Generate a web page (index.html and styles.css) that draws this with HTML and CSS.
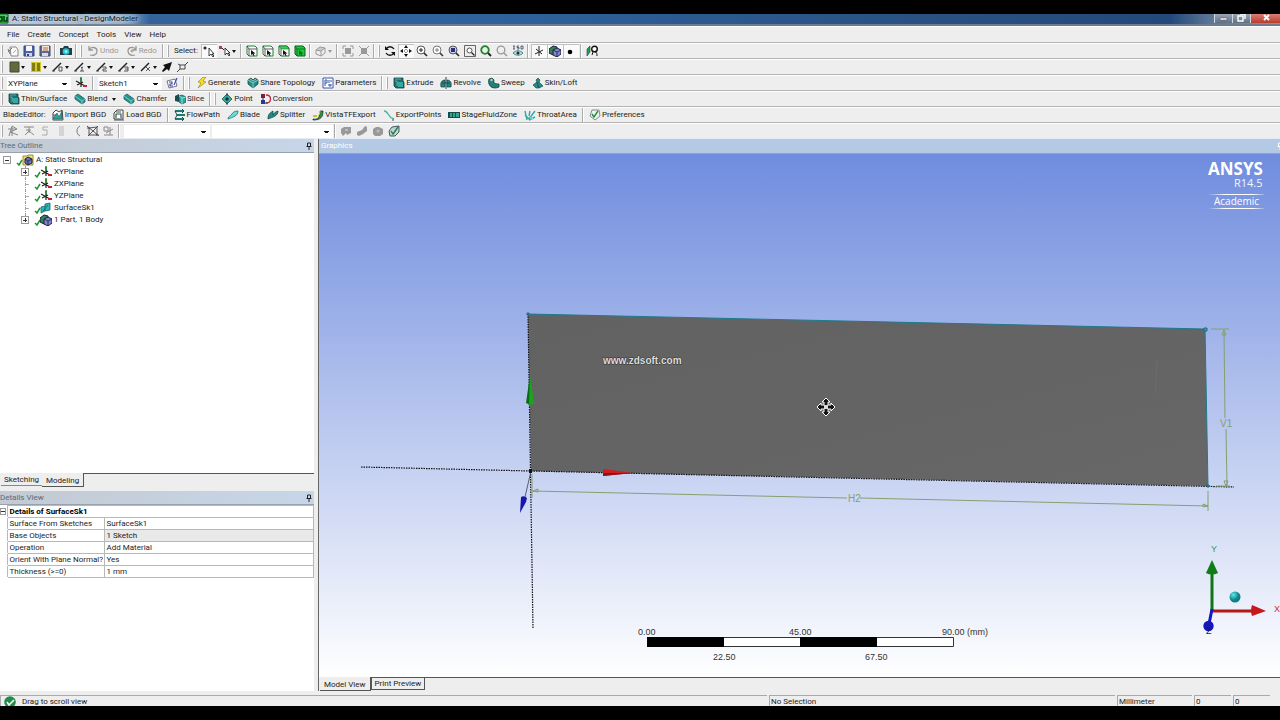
FILE: index.html
```html
<!DOCTYPE html>
<html lang="en">
<head>
<meta charset="utf-8">
<title>A: Static Structural - DesignModeler</title>
<link rel="stylesheet" href="styles.css">
</head>
<body>
<svg class="sprite" aria-hidden="true">
  <defs>
    <symbol id="new" viewBox="0 0 12 12"><path d="M3 2h6l2 3v6H4z" fill="#fafafa" stroke="#888"/><path d="M1 7l4-4M1 4l2 5" stroke="#777" fill="none"/><path d="M6 8l3-3" stroke="#aaa"/></symbol>
    <symbol id="save" viewBox="0 0 12 12"><path d="M1 1h10v10H1z" fill="#4a62a4" stroke="#33457c"/><path d="M3 1h6v5H3z" fill="#f4f6fc"/><path d="M3 8h6v3H3z" fill="#ccd4e8"/><path d="M4 9h2v2H4z" fill="#33457c"/></symbol>
    <symbol id="saveas" viewBox="0 0 12 12"><path d="M1 1h10v10H1z" fill="#5d6b96" stroke="#414b70"/><path d="M3 1h7v5H3z" fill="#f2e3d6"/><path d="M4 3h5M4 5h5" stroke="#b56f4a"/><path d="M3 8h6v3H3z" fill="#ddd"/></symbol>
    <symbol id="camera" viewBox="0 0 12 12"><path d="M0 3h3l1-2h4l1 2h3v7H0z" fill="#243c46"/><circle cx="6" cy="6.5" r="3.3" fill="#27c4cf"/><circle cx="6" cy="6.5" r="1.3" fill="#b9f6f6"/></symbol>
    <symbol id="undo" viewBox="0 0 12 12"><path d="M2 1v4h4M2 5c2-4 8-3 8 1s-4 5-7 4" fill="none" stroke="#999" stroke-width="1.3"/></symbol>
    <symbol id="redo" viewBox="0 0 12 12"><path d="M10 1v4H6M10 5C8 1 2 2 2 6s4 5 7 4" fill="none" stroke="#999" stroke-width="1.3"/><circle cx="6" cy="6" r="1.5" fill="#aaa"/></symbol>
    <symbol id="pick" viewBox="0 0 12 12"><path d="M0 3h4M2 1v4M1 2l2 2M3 2L1 4" stroke="#222" stroke-width=".8"/><path d="M6 3v8l2-2 2 3 1-1-2-2h2z" fill="#fff" stroke="#111" stroke-width=".8"/></symbol>
    <symbol id="pickmode" viewBox="0 0 12 12"><path d="M0 1h3v3H0z" fill="#b33b42"/><path d="M6 3v7l2-2 2 3 1-1-2-2h2z" fill="#fff" stroke="#111" stroke-width=".8"/><path d="M3 3l2 2" stroke="#222"/></symbol>
    <symbol id="cube-v" viewBox="0 0 12 12"><path d="M1 1h8l2 2v8H3L1 9z" fill="#fff" stroke="#23803a"/><path d="M1 1l2 3v7M3 4h8" fill="none" stroke="#333" stroke-width=".8"/><path d="M5 5v5l1.5-1 1 2 1-.5-1-2h2z" fill="#111"/></symbol>
    <symbol id="cube-f" viewBox="0 0 12 12"><path d="M1 1h8l2 2v8H3L1 9z" fill="#fff" stroke="#176b2c"/><path d="M1 1h8l2 3H3z" fill="#36d153" stroke="#176b2c" stroke-width=".6"/><path d="M3 4v7" stroke="#333" stroke-width=".8"/><path d="M5 5v5l1.5-1 1 2 1-.5-1-2h2z" fill="#111"/></symbol>
    <symbol id="cube-b" viewBox="0 0 12 12"><path d="M1 1h8l2 2v8H3L1 9z" fill="#1fc93b" stroke="#08631b"/><path d="M1 1l2 3v7M3 4h8" fill="none" stroke="#08631b" stroke-width=".8"/><path d="M5 5v5l1.5-1 1 2 1-.5-1-2h2z" fill="#062"/></symbol>
    <symbol id="cube-g" viewBox="0 0 12 12"><path d="M1 5l4-3 5 1-4 3z" fill="#ccc" stroke="#999"/><path d="M1 5v4l5 2V6M6 11l4-3V3" fill="none" stroke="#999"/></symbol>
    <symbol id="expand" viewBox="0 0 12 12"><path d="M3 3h6v6H3z" fill="#999"/><path d="M1 4V1h3M8 1h3v3M11 8v3H8M4 11H1V8" fill="none" stroke="#999"/></symbol>
    <symbol id="shrink" viewBox="0 0 12 12"><path d="M3 3h6v6H3z" fill="#999"/><path d="M1 1l3 3M11 1L8 4M11 11L8 8M1 11l3-3" stroke="#999"/></symbol>
    <symbol id="rotate" viewBox="0 0 12 12"><path d="M10 4C8 1 4 1 2 4M2 8c2 3 6 3 8 0" fill="none" stroke="#111" stroke-width="1.3"/><path d="M1 1v4h4zM11 11V7H7z" fill="#111"/></symbol>
    <symbol id="pan" viewBox="0 0 12 12"><path d="M6 0l2 3H4zM6 12l2-3H4zM0 6l3-2v4zM12 6L9 4v4z" fill="#111"/><path d="M6 4v1M6 7v1M4 6h1M7 6h1" stroke="#333"/></symbol>
    <symbol id="zoom-in" viewBox="0 0 12 12"><circle cx="5" cy="5" r="4" fill="#fff" stroke="#555"/><path d="M5 3v4M3 5h4" stroke="#222"/><path d="M8 8l3 3" stroke="#222" stroke-width="1.6"/></symbol>
    <symbol id="zoom-pm" viewBox="0 0 12 12"><circle cx="5" cy="5" r="4" fill="#fff" stroke="#777"/><path d="M5 3v4M3 5h4" stroke="#666" stroke-width=".8"/><path d="M8 8l3 3" stroke="#333" stroke-width="1.5"/></symbol>
    <symbol id="zoom-box" viewBox="0 0 12 12"><circle cx="5" cy="5" r="4" fill="#cdd0f0" stroke="#555"/><path d="M3 3h4v4H3z" fill="#28307f"/><path d="M8 8l3 3" stroke="#222" stroke-width="1.6"/></symbol>
    <symbol id="zoom-win" viewBox="0 0 12 12"><path d="M.5 .5h11v11H.5z" fill="#eee" stroke="#666"/><circle cx="5.5" cy="5.5" r="2.5" fill="#fff" stroke="#555"/><path d="M7.5 7.5l3 3" stroke="#222" stroke-width="1.3"/></symbol>
    <symbol id="zoom-fit" viewBox="0 0 12 12"><circle cx="5" cy="5" r="3.8" fill="#dff6df" stroke="#25812e" stroke-width="1.8"/><path d="M8 8l3 3" stroke="#222" stroke-width="1.8"/></symbol>
    <symbol id="zoom-off" viewBox="0 0 12 12"><circle cx="5" cy="5" r="3.8" fill="#eee" stroke="#999" stroke-width="1.3"/><path d="M8 8l3 3" stroke="#999" stroke-width="1.5"/></symbol>
    <symbol id="iso" viewBox="0 0 12 12"><path d="M1 1h2M2 1v3M1 4h2M7 1H5v1.5h2V4H5M9 1h2v3H9z" stroke="#345" fill="none" stroke-width=".8"/><path d="M1 8c3-3 7-3 10 0-3 3-7 3-10 0z" fill="#b8dede" stroke="#276d72" stroke-width=".8"/><circle cx="6" cy="8" r="1.5" fill="#133"/></symbol>
    <symbol id="tri" viewBox="0 0 12 12"><path d="M6 1v10M2 9l8-4M3 4l6 5" stroke="#222"/></symbol>
    <symbol id="solid" viewBox="0 0 12 12"><path d="M0 4l4-3 4 1v6L4 10 0 8z" fill="#378052" stroke="#124"/><path d="M4 5l4-2 4 2v4l-4 3-4-2z" fill="#7c84d6" stroke="#223"/><path d="M4 5l4 2v5M8 7l4-2" fill="none" stroke="#223" stroke-width=".8"/></symbol>
    <symbol id="dot" viewBox="0 0 12 12"><circle cx="5" cy="7" r="2.3" fill="#000"/></symbol>
    <symbol id="look" viewBox="0 0 12 12"><path d="M1 4l3-3v6l-3 4z" fill="#28a03a" stroke="#145" stroke-width=".6"/><circle cx="8.5" cy="4" r="2.8" fill="#fff" stroke="#111" stroke-width="1.4"/><path d="M7 7l-1 3M9 7c2 0 2 2 2 4" stroke="#111" fill="none"/></symbol>
    <symbol id="swatch" viewBox="0 0 12 12"><path d="M2 1h9v10H2z" fill="#65683e" stroke="#46482c"/></symbol>
    <symbol id="swatch2" viewBox="0 0 12 12"><path d="M1 1h10v10H1z" fill="#d5c928"/><path d="M2 2h3v8H2zM7 2h3v8H7z" fill="#837c14"/></symbol>
    <symbol id="edge0" viewBox="0 0 12 12"><path d="M1 10L9 2" stroke="#222" stroke-width="1.5"/><path d="M0 10h3M7 6h3v4H7z" fill="none" stroke="#444" stroke-width=".9"/></symbol>
    <symbol id="edge1" viewBox="0 0 12 12"><path d="M1 10L9 2" stroke="#222" stroke-width="1.5"/><path d="M0 10h3M8 6v4M7 7l2-1M6 10h4" stroke="#444" stroke-width=".9"/></symbol>
    <symbol id="edge2" viewBox="0 0 12 12"><path d="M1 10L9 2" stroke="#222" stroke-width="1.5"/><path d="M0 10h3M6 6h4v2H7v2h4" fill="none" stroke="#444" stroke-width=".9"/></symbol>
    <symbol id="edge3" viewBox="0 0 12 12"><path d="M1 10L9 2" stroke="#222" stroke-width="1.5"/><path d="M0 10h3M6 6h4v4H6M7 8h3" fill="none" stroke="#444" stroke-width=".9"/></symbol>
    <symbol id="edgex" viewBox="0 0 12 12"><path d="M1 10L9 2" stroke="#222" stroke-width="1.5"/><path d="M6 6l4 4M10 6l-4 4" stroke="#444" stroke-width=".9"/></symbol>
    <symbol id="arrow" viewBox="0 0 12 12"><path d="M11 1L8 10 6 8l-4 3-1-1 3-4-2-2z" fill="#111"/></symbol>
    <symbol id="pts" viewBox="0 0 12 12"><path d="M3 4h5v4H3zM8 4l3-3M3 8l-3 3M1 3l2 1" fill="none" stroke="#444"/></symbol>
    <symbol id="plane" viewBox="0 0 12 12"><path d="M6 1v9M1 4l9 5M2 8l6-3" stroke="#222" stroke-width="1.2"/><path d="M6 0v5" stroke="#278b36" stroke-width="1.5"/><path d="M8 8h4v2H8z" fill="#bd2334"/></symbol>
    <symbol id="sketch" viewBox="0 0 12 12"><path d="M1 4l8-2 2 7-8 2z" fill="#fff" stroke="#556" stroke-width=".8"/><path d="M3 5h3v2H4v2h3M8 8l3-7" fill="none" stroke="#3648a6" stroke-width="1.1"/></symbol>
    <symbol id="bolt" viewBox="0 0 12 12"><path d="M8 0L3 5l3 1-3 5 8-6-3-1 3-4z" fill="#f5dd23" stroke="#8d7d17" stroke-width=".6"/></symbol>
    <symbol id="share" viewBox="0 0 12 12"><path d="M1 3l3-2 2 2 2-2 3 2v4l-5 4-5-4z" fill="#238c88" stroke="#124848" stroke-width=".8"/><path d="M1 3l5 3 5-3M6 6v5M3 2l3 2 3-2" fill="none" stroke="#a5dad6" stroke-width=".8"/></symbol>
    <symbol id="param" viewBox="0 0 12 12"><path d="M1 1h10v10H1z" fill="#fff" stroke="#3659aa"/><path d="M3 9V3h2v3H3M7 3v3M6 8h4M8 7v3M9 3v2" fill="none" stroke="#3659aa"/></symbol>
    <symbol id="extrude" viewBox="0 0 12 12"><path d="M1 1h9v3l1 1v6H3L1 9z" fill="#246b6b" stroke="#123f42" stroke-width=".8"/><path d="M4 5h6v5H5z" fill="#32aaa2"/><path d="M2 2h6M2 4h2v5" fill="none" stroke="#60bfb8" stroke-width=".8"/></symbol>
    <symbol id="revolve" viewBox="0 0 12 12"><path d="M1 10C0 5 2 3 5 3v7zM11 10c1-5-1-7-4-7v7z" fill="#25837c" stroke="#14484a" stroke-width=".7"/><path d="M6 0v12M2 6h8" stroke="#174c4c"/></symbol>
    <symbol id="sweep" viewBox="0 0 12 12"><path d="M1 2l3-1 2 2c-1 3 1 4 5 4v3c-6 3-12-1-10-8z" fill="#258078" stroke="#133f40" stroke-width=".8"/><circle cx="3.5" cy="3" r="1.2" fill="#9bdcd5"/></symbol>
    <symbol id="loft" viewBox="0 0 12 12"><path d="M6 1l2 2-1 2 4 4-4 2H4L1 8l4-3-1-2z" fill="#258b84" stroke="#155052" stroke-width=".7"/><path d="M5 5l2 6" stroke="#135" stroke-width=".7"/></symbol>
    <symbol id="blend" viewBox="0 0 12 12"><path d="M1 3l3-2 7 5v3l-3 2-7-5z" fill="#21958f" stroke="#135356" stroke-width=".7"/><path d="M1 3l7 5 3-2M8 8v3" fill="none" stroke="#a5dedb" stroke-width=".7"/></symbol>
    <symbol id="slice" viewBox="0 0 12 12"><path d="M1 3l4-2v8l-4-1z" fill="#184f54"/><path d="M5 3l3-1 4 2v5l-4 2-3-2z" fill="#2ca79d" stroke="#134a4c" stroke-width=".7"/><path d="M5 3l3 2 4-1M8 5v6" fill="none" stroke="#d0efe9" stroke-width=".7"/></symbol>
    <symbol id="point" viewBox="0 0 12 12"><path d="M6 1l5 5-5 5-5-5z" fill="#3ba69d" stroke="#17585a" stroke-width=".8"/><circle cx="6" cy="6" r="1.7" fill="#0d3437"/><path d="M6 0v3M6 9v3" stroke="#222" stroke-width=".8"/></symbol>
    <symbol id="conv" viewBox="0 0 12 12"><path d="M1 1h4v4H1z" fill="#7d2036"/><path d="M1 7h4v4H1z" fill="#28398f"/><path d="M6 2c6 0 6 8 0 8" fill="none" stroke="#bd2b3f" stroke-width="1.3"/><path d="M3 5v2M5 10h3" stroke="#333"/></symbol>
    <symbol id="import" viewBox="0 0 12 12"><path d="M1 4l3-3 3 2 3-2 1 10H1z" fill="#fff" stroke="#444"/><path d="M1 9l4-5 2 4 3-6v8H2z" fill="#2fa59c" stroke="#174f52" stroke-width=".6"/><path d="M1 6h3" stroke="#a33"/></symbol>
    <symbol id="load" viewBox="0 0 12 12"><path d="M1 4l3-3h6v9H1z" fill="#fff" stroke="#444"/><path d="M3 9V5h5v4M1 11h10M3 3h5" fill="none" stroke="#345a55" stroke-width="1.2"/></symbol>
    <symbol id="flow" viewBox="0 0 12 12"><path d="M1 2h9M3 6h8M1 10h9" stroke="#1c7a76" stroke-width="1.8"/><path d="M1 2l2 4-2 4M8 0l2 2-2 2M8 8l2 2-2 2" fill="none" stroke="#175154"/></symbol>
    <symbol id="blade" viewBox="0 0 12 12"><path d="M1 10c0-3 2-2 4-5 1-2 3-3 6-3 0 5-5 6-10 8z" fill="#6cdcd6" stroke="#1b7478" stroke-width=".8"/></symbol>
    <symbol id="split" viewBox="0 0 12 12"><path d="M1 10c0-5 2-6 5-8v4c1-2 2-3 5-4 0 5-5 6-10 8z" fill="#238a83" stroke="#174d50" stroke-width=".8"/></symbol>
    <symbol id="vista" viewBox="0 0 12 12"><path d="M1 6h4v2H1z" fill="#c9c21b"/><path d="M1 10c5 1 7-2 7-8h3c0 6-2 9-10 9z" fill="#2f9640" stroke="#123" stroke-width=".7"/><path d="M6 7c1-1 2-3 2-5" fill="none" stroke="#e0d936"/></symbol>
    <symbol id="expts" viewBox="0 0 12 12"><path d="M1 2c2 0 3 1 4 3s3 4 6 5" fill="none" stroke="#49b4ad" stroke-width="1.4"/><path d="M9 11h2" stroke="#456"/></symbol>
    <symbol id="stage" viewBox="0 0 12 12"><path d="M0 3h12v6H0z" fill="#174d49"/><path d="M2 4h2v4H2zM5 4h2v4H5zM8 4h3v4H8z" fill="#31a590"/></symbol>
    <symbol id="throat" viewBox="0 0 12 12"><path d="M1 2l2 9M1 6l4 4 6-8M5 11l6-3M6 2L5 7" fill="none" stroke="#33a9a5" stroke-width="1.4"/><path d="M6 8h3v2H6z" fill="#72d5d2"/></symbol>
    <symbol id="pref" viewBox="0 0 12 12"><path d="M3 1h7l1 6-5 4-5-4z" fill="#eaf5ec" stroke="#64756d" stroke-width=".8"/><path d="M3 5l2 3 4-6" fill="none" stroke="#26883f" stroke-width="1.4"/></symbol>
    <symbol id="b1" viewBox="0 0 12 12"><path d="M2 11L5 1l5 3-7 3 8 3M1 4h8M5 2v9" fill="none" stroke="#888"/></symbol>
    <symbol id="b2" viewBox="0 0 12 12"><path d="M1 2h10M6 2v6M2 10l4-4 5 4M3 5h5" fill="none" stroke="#888"/></symbol>
    <symbol id="b3" viewBox="0 0 12 12"><path d="M9 2H4v3h4v5H3" fill="none" stroke="#aaa"/></symbol>
    <symbol id="b4" viewBox="0 0 12 12"><path d="M4 2h5M4 4h5M4 6h5M4 8h5M4 10h5" stroke="#bbb"/></symbol>
    <symbol id="b5" viewBox="0 0 12 12"><path d="M9 1C5 3 5 9 9 11" fill="none" stroke="#777"/></symbol>
    <symbol id="b6" viewBox="0 0 12 12"><path d="M2 3l8-1v8H2zM0 1l12 10M1 11L11 1M0 3h3M9 10h3" fill="none" stroke="#444" stroke-width=".9"/></symbol>
    <symbol id="b7" viewBox="0 0 12 12"><path d="M1 2h4v4H1zM1 10h9M3 8l7-4M7 2v8" fill="none" stroke="#888"/></symbol>
    <symbol id="g1" viewBox="0 0 12 12"><path d="M1 4l3-2h7v6l-4 2-1-2-3 3-2-3z" fill="#999"/><path d="M5 5h3" stroke="#ddd"/></symbol>
    <symbol id="g2" viewBox="0 0 12 12"><path d="M1 7l5-2 3-4 2 1v4L7 9l-4 2-2-1z" fill="#999"/></symbol>
    <symbol id="g3" viewBox="0 0 12 12"><path d="M1 4l3-2h3l4 2v5l-3 2H3L1 9z" fill="#999"/><circle cx="6" cy="6" r="1.5" fill="#bbb"/></symbol>
    <symbol id="g4" viewBox="0 0 12 12"><path d="M1 6l3-4 7-1v6l-4 4H2z" fill="#b9d9cc" stroke="#234" stroke-width=".8"/><path d="M3 6l2 3 5-7" fill="none" stroke="#28764a" stroke-width="1.3"/></symbol>
    <symbol id="tick" viewBox="0 0 7 7"><path d="M1 4l2 2 3-5" fill="none" stroke="#1a9a28" stroke-width="1.5"/></symbol>
    <symbol id="model" viewBox="0 0 12 12"><path d="M1 2h4l1-1h5v10H1z" fill="#eadf7c" stroke="#9b9136"/><path d="M3 5l3-2 4 2v4l-4 2-3-2z" fill="#6870c5" stroke="#223"/><path d="M3 5l3 2 4-2M6 7v4" fill="none" stroke="#223" stroke-width=".8"/></symbol>
    <symbol id="surf" viewBox="0 0 12 12"><path d="M1 5l4-1V2l5-1v7l-5 1-4 2z" fill="#28b8bd" stroke="#176065" stroke-width=".8"/><path d="M5 4v5M8 3l-5 6" stroke="#176065" stroke-width=".8"/></symbol>
    <symbol id="pin" viewBox="0 0 8 8"><path d="M2.5 1h3v3.5h-3zM1.5 4.5h5M4 5v3" fill="none" stroke="currentColor"/></symbol>
  </defs>
</svg>

<div class="app">
  <header class="titlebar">
    <svg class="icon" viewBox="0 0 12 12"><path d="M0 1h10v9H0z" fill="#41d854" stroke="#11551d"/><path d="M1 4h3v4H1M6 3v5h3V4" fill="none" stroke="#073311" stroke-width="1.5"/></svg>
    <h1 class="title">A: Static Structural - DesignModeler</h1>
    <div class="winbtns">
      <button class="winbtn" aria-label="Minimize"><svg viewBox="0 0 12 10"><path d="M2 4h7v2H2z" fill="#fff" stroke="#445" stroke-width=".5"/></svg></button>
      <button class="winbtn" aria-label="Restore"><svg viewBox="0 0 12 10"><path d="M4 0h5v5M2 2h5v5H2z" fill="none" stroke="#fff" stroke-width="1.4"/></svg></button>
      <button class="winbtn close" aria-label="Close"><svg viewBox="0 0 12 10"><path d="M4 1l5 5M9 1L4 6" stroke="#fff" stroke-width="1.8"/></svg></button>
    </div>
  </header>

  <nav class="menu bar">
    <button>File</button><button>Create</button><button>Concept</button><button>Tools</button><button>View</button><button>Help</button>
  </nav>

  <div class="bar">
    <i class="grip"></i>
    <button class="tb" aria-label="New"><svg class="icon"><use href="#new"/></svg></button>
    <button class="tb" aria-label="Save"><svg class="icon"><use href="#save"/></svg></button>
    <button class="tb" aria-label="Save as"><svg class="icon"><use href="#saveas"/></svg></button>
    <i class="sep"></i>
    <button class="tb" aria-label="Snapshot"><svg class="icon"><use href="#camera"/></svg></button>
    <i class="sep"></i><i class="grip"></i>
    <button class="tool off" disabled><svg class="icon"><use href="#undo"/></svg>Undo</button>
    <button class="tool off" disabled><svg class="icon"><use href="#redo"/></svg>Redo</button>
    <i class="sep"></i><i class="grip"></i>
    <span class="label">Select:</span>
    <button class="tb on" aria-label="New selection"><svg class="icon"><use href="#pick"/></svg></button>
    <button class="tb drop" aria-label="Select mode"><svg class="icon"><use href="#pickmode"/></svg></button>
    <i class="sep"></i>
    <button class="tb" aria-label="Points"><svg class="icon"><use href="#cube-v"/></svg></button>
    <button class="tb" aria-label="Edges"><svg class="icon"><use href="#cube-v"/></svg></button>
    <button class="tb" aria-label="Faces"><svg class="icon"><use href="#cube-f"/></svg></button>
    <button class="tb" aria-label="Bodies"><svg class="icon"><use href="#cube-b"/></svg></button>
    <i class="sep"></i>
    <button class="tb drop off" aria-label="Extend"><svg class="icon"><use href="#cube-g"/></svg></button>
    <i class="sep"></i>
    <button class="tb" aria-label="Expand"><svg class="icon"><use href="#expand"/></svg></button>
    <button class="tb" aria-label="Shrink"><svg class="icon"><use href="#shrink"/></svg></button>
    <i class="sep"></i><i class="grip"></i>
    <button class="tb" aria-label="Rotate"><svg class="icon"><use href="#rotate"/></svg></button>
    <button class="tb on" aria-label="Pan"><svg class="icon"><use href="#pan"/></svg></button>
    <button class="tb" aria-label="Zoom"><svg class="icon"><use href="#zoom-in"/></svg></button>
    <button class="tb" aria-label="Zoom in or out"><svg class="icon"><use href="#zoom-pm"/></svg></button>
    <button class="tb" aria-label="Box zoom"><svg class="icon"><use href="#zoom-box"/></svg></button>
    <button class="tb" aria-label="Window zoom"><svg class="icon"><use href="#zoom-win"/></svg></button>
    <button class="tb" aria-label="Zoom to fit"><svg class="icon"><use href="#zoom-fit"/></svg></button>
    <button class="tb" aria-label="Magnifier"><svg class="icon"><use href="#zoom-off"/></svg></button>
    <button class="tb" aria-label="Isometric"><svg class="icon"><use href="#iso"/></svg></button>
    <i class="sep"></i>
    <button class="tb on" aria-label="Display plane"><svg class="icon"><use href="#tri"/></svg></button>
    <button class="tb on" aria-label="Display model"><svg class="icon"><use href="#solid"/></svg></button>
    <button class="tb on" aria-label="Display points"><svg class="icon"><use href="#dot"/></svg></button>
    <i class="sep"></i>
    <button class="tb" aria-label="Look at"><svg class="icon"><use href="#look"/></svg></button>
  </div>

  <div class="bar">
    <i class="grip"></i>
    <button class="tb drop" aria-label="Face color"><svg class="icon"><use href="#swatch"/></svg></button>
    <button class="tb drop" aria-label="Edge color"><svg class="icon"><use href="#swatch2"/></svg></button>
    <button class="tb drop" aria-label="Edge 0"><svg class="icon"><use href="#edge0"/></svg></button>
    <button class="tb drop" aria-label="Edge 1"><svg class="icon"><use href="#edge1"/></svg></button>
    <button class="tb drop" aria-label="Edge 2"><svg class="icon"><use href="#edge2"/></svg></button>
    <button class="tb drop" aria-label="Edge 3"><svg class="icon"><use href="#edge3"/></svg></button>
    <button class="tb drop" aria-label="Edge x"><svg class="icon"><use href="#edgex"/></svg></button>
    <button class="tb" aria-label="Direction"><svg class="icon"><use href="#arrow"/></svg></button>
    <button class="tb" aria-label="Vertices"><svg class="icon"><use href="#pts"/></svg></button>
  </div>

  <div class="bar">
    <i class="grip"></i>
    <select class="combo" aria-label="Active plane"><option>XYPlane</option></select>
    <button class="tb wide" aria-label="New plane"><svg class="icon"><use href="#plane"/></svg></button>
    <i class="sep"></i>
    <select class="combo" aria-label="Active sketch"><option>Sketch1</option></select>
    <button class="tb wide" aria-label="New sketch"><svg class="icon"><use href="#sketch"/></svg></button>
    <i class="sep"></i><i class="grip"></i>
    <button class="tool"><svg class="icon"><use href="#bolt"/></svg>Generate</button>
    <button class="tool"><svg class="icon"><use href="#share"/></svg>Share Topology</button>
    <button class="tool"><svg class="icon"><use href="#param"/></svg>Parameters</button>
    <i class="sep"></i><i class="grip"></i>
    <button class="tool"><svg class="icon"><use href="#extrude"/></svg>Extrude</button>
    <button class="tool"><svg class="icon"><use href="#revolve"/></svg>Revolve</button>
    <button class="tool"><svg class="icon"><use href="#sweep"/></svg>Sweep</button>
    <button class="tool"><svg class="icon"><use href="#loft"/></svg>Skin/Loft</button>
  </div>

  <div class="bar">
    <i class="grip"></i>
    <button class="tool"><svg class="icon"><use href="#extrude"/></svg>Thin/Surface</button>
    <button class="tool drop"><svg class="icon"><use href="#blend"/></svg>Blend</button>
    <button class="tool"><svg class="icon"><use href="#blend"/></svg>Chamfer</button>
    <button class="tool"><svg class="icon"><use href="#slice"/></svg>Slice</button>
    <i class="sep"></i><i class="grip"></i>
    <button class="tool"><svg class="icon"><use href="#point"/></svg>Point</button>
    <button class="tool"><svg class="icon"><use href="#conv"/></svg>Conversion</button>
  </div>

  <div class="bar">
    <span class="label">BladeEditor:</span>
    <button class="tool"><svg class="icon"><use href="#import"/></svg>Import BGD</button>
    <button class="tool"><svg class="icon"><use href="#load"/></svg>Load BGD</button>
    <i class="sep"></i>
    <button class="tool"><svg class="icon"><use href="#flow"/></svg>FlowPath</button>
    <button class="tool"><svg class="icon"><use href="#blade"/></svg>Blade</button>
    <button class="tool"><svg class="icon"><use href="#split"/></svg>Splitter</button>
    <button class="tool"><svg class="icon"><use href="#vista"/></svg>VistaTFExport</button>
    <button class="tool"><svg class="icon"><use href="#expts"/></svg>ExportPoints</button>
    <button class="tool"><svg class="icon"><use href="#stage"/></svg>StageFluidZone</button>
    <button class="tool"><svg class="icon"><use href="#throat"/></svg>ThroatArea</button>
    <i class="sep"></i>
    <button class="tool"><svg class="icon"><use href="#pref"/></svg>Preferences</button>
  </div>

  <div class="bar last">
    <i class="grip"></i>
    <button class="tb" aria-label="Blade tool 1"><svg class="icon"><use href="#b1"/></svg></button>
    <button class="tb" aria-label="Blade tool 2"><svg class="icon"><use href="#b2"/></svg></button>
    <button class="tb" aria-label="Blade tool 3"><svg class="icon"><use href="#b3"/></svg></button>
    <button class="tb" aria-label="Blade tool 4"><svg class="icon"><use href="#b4"/></svg></button>
    <button class="tb" aria-label="Blade tool 5"><svg class="icon"><use href="#b5"/></svg></button>
    <button class="tb" aria-label="Blade tool 6"><svg class="icon"><use href="#b6"/></svg></button>
    <button class="tb" aria-label="Blade tool 7"><svg class="icon"><use href="#b7"/></svg></button>
    <i class="sep"></i>
    <select class="combo medium" aria-label="Blade"><option></option></select>
    <select class="combo long" aria-label="Layer"><option></option></select>
    <i class="sep"></i>
    <button class="tb" aria-label="Section 1"><svg class="icon"><use href="#g1"/></svg></button>
    <button class="tb" aria-label="Section 2"><svg class="icon"><use href="#g2"/></svg></button>
    <button class="tb" aria-label="Section 3"><svg class="icon"><use href="#g3"/></svg></button>
    <button class="tb" aria-label="Section 4"><svg class="icon"><use href="#g4"/></svg></button>
  </div>

  <main class="work">
    <aside class="side">
      <h2 class="head">Tree Outline<svg class="pin"><use href="#pin"/></svg></h2>
      <ul class="tree">
        <li class="node"><span class="box minus"></span><svg class="tick"><use href="#tick"/></svg><svg class="icon"><use href="#model"/></svg>A: Static Structural</li>
        <li class="node sub"><span class="box plus"></span><svg class="tick"><use href="#tick"/></svg><svg class="icon"><use href="#plane"/></svg>XYPlane</li>
        <li class="node sub"><span class="twig"></span><svg class="tick"><use href="#tick"/></svg><svg class="icon"><use href="#plane"/></svg>ZXPlane</li>
        <li class="node sub"><span class="twig"></span><svg class="tick"><use href="#tick"/></svg><svg class="icon"><use href="#plane"/></svg>YZPlane</li>
        <li class="node sub"><span class="twig"></span><svg class="tick"><use href="#tick"/></svg><svg class="icon"><use href="#surf"/></svg>SurfaceSk1</li>
        <li class="node sub"><span class="box plus"></span><svg class="tick"><use href="#tick"/></svg><svg class="icon"><use href="#solid"/></svg>1 Part, 1 Body</li>
      </ul>
      <div class="tabs"><button class="tab">Sketching</button><button class="tab current">Modeling</button><span class="rest"></span></div>
      <h2 class="head">Details View<svg class="pin"><use href="#pin"/></svg></h2>
      <div class="details">
        <table class="grid">
          <colgroup><col class="fold-col"><col class="key-col"><col></colgroup>
          <tr><td class="fold"><span class="box minus"></span></td><th colspan="2">Details of SurfaceSk1</th></tr>
          <tr><td class="fold"></td><td>Surface From Sketches</td><td>SurfaceSk1</td></tr>
          <tr><td class="fold"></td><td>Base Objects</td><td class="ro">1 Sketch</td></tr>
          <tr><td class="fold"></td><td>Operation</td><td>Add Material</td></tr>
          <tr><td class="fold"></td><td>Orient With Plane Normal?</td><td>Yes</td></tr>
          <tr><td class="fold"></td><td>Thickness (&gt;=0)</td><td>1 mm</td></tr>
        </table>
      </div>
    </aside>

    <section class="view">
      <h2 class="head light">Graphics<svg class="pin"><use href="#pin"/></svg></h2>
      <div class="canvas">
        <svg class="scene" viewBox="319 154 961 523" preserveAspectRatio="xMidYMid meet">
          <defs>
            <linearGradient id="rule"><stop offset="0" stop-color="#fff" stop-opacity="0"/><stop offset=".3" stop-color="#fff"/><stop offset=".8" stop-color="#fff"/><stop offset="1" stop-color="#fff" stop-opacity=".2"/></linearGradient>
            <linearGradient id="face" x2="1" y2="1"><stop offset="0" stop-color="#626262"/><stop offset=".5" stop-color="#646464"/><stop offset="1" stop-color="#676767"/></linearGradient>
            <radialGradient id="ball" cx=".35" cy=".3"><stop offset="0" stop-color="#5fe9ea"/><stop offset="1" stop-color="#0d7f85"/></radialGradient>
          </defs>
          <text class="logo" x="1208" y="175">ANSYS</text>
          <text class="release" x="1234" y="187">R14.5</text>
          <text class="edition" x="1214" y="205">Academic</text>
          <path d="M1208 194h56v1h-56zM1208 208h56v1h-56z" fill="url(#rule)"/>

          <path d="M528 314L1205 329 1208 486 531 471z" fill="url(#face)"/>
          <path d="M528 314L1205 329 1208 486" fill="none" stroke="#20798c"/>
          <path d="M361 467L531 471 1234 487M528 314L533 628" fill="none" stroke="#111" stroke-width="1.2" stroke-dasharray="1.5 1"/>
          <path d="M527 313h2v2h-2zM1204 328h3v3h-3zM1207 485h2v2h-2z" fill="#30a6c0" stroke="#176d82"/>
          <path d="M1157 360l-2 34" stroke="#6c6c6c"/>
          <path d="M530 375l4 28q-4 4-7 0z" fill="#18a51e"/><path d="M530 375l-1 29-3-1z" fill="#0b6b12"/>
          <path d="M603 469l30 4-30 3z" fill="#cf1d20"/><path d="M603 473l30 0-30 3z" fill="#8e1114"/>
          <path d="M531 471l-6 26" stroke="#555c78"/><path d="M521 497q3-2 6 1l-1 4-6 11z" fill="#1717ad"/>
          <path d="M529 469h3v4h-3z" fill="#111"/>

          <g fill="none" stroke="#84a070"><path d="M532 474v24M532 491l315 7M860 498l348 8M1208 491v20M533 491l5-2v3zM1208 506l-5-2v3z"/><path d="M1211 329h18M1224 330l1 88M1226 429l1 57M1224 330l-2 5h4zM1226 486l-2-5h4zM1216 486h14"/></g>
          <text class="dim" x="848" y="502">H2</text>
          <text class="dim" x="1220" y="427">V1</text>
          <text class="mark" x="603" y="364">www.zdsoft.com</text>
          <path d="M826 398l4 4h-2v3h3v-2l4 4-4 4v-2h-3v3h2l-4 4-4-4h2v-3h-3v2l-4-4 4-4v2h3v-3h-2z" fill="#111" stroke="#fff"/><path d="M824 405h4v4h-4z" fill="#ddd"/>

          <path d="M1212 610v-38" stroke="#117517" stroke-width="3"/><path d="M1212 560l6 13q-6 3-12 0z" fill="#117d18"/>
          <path d="M1212 611l42 0" stroke="#b51618" stroke-width="3"/><path d="M1252 605l14 6-14 5q-2-5 0-11z" fill="#c5191b"/>
          <path d="M1212 609l-3 15" stroke="#1717c3" stroke-width="3"/><circle cx="1208.5" cy="626" r="5.2" fill="#1616bb"/>
          <circle cx="1235" cy="597" r="5.5" fill="url(#ball)"/>
          <text class="axis green" x="1211" y="552">Y</text><text class="axis red" x="1274" y="612">X</text><text class="axis blue" x="1206" y="634">Z</text>

          <path d="M647.5 637.5h306v9h-306z" fill="#fff" stroke="#333"/><path d="M647 637h77v10h-77zM800 637h77v10h-77z" fill="#000"/>
          <g class="scale"><text x="638" y="635">0.00</text><text x="789" y="635">45.00</text><text x="942" y="635">90.00 (mm)</text><text x="713" y="660">22.50</text><text x="865" y="660">67.50</text></g>
        </svg>
      </div>
      <div class="tabs"><button class="tab current">Model View</button><button class="tab boxed">Print Preview</button><span class="rest"></span></div>
    </section>
  </main>

  <footer class="status">
    <div class="cell grow"><svg class="icon" viewBox="0 0 12 12"><circle cx="6" cy="6" r="5.8" fill="#218c46"/><path d="M3 6l2 3 5-5" fill="none" stroke="#fff" stroke-width="1.6"/></svg>Drag to scroll view</div>
    <div class="cell sel">No Selection</div>
    <div class="cell unit">Millimeter</div>
    <div class="cell num">0</div>
    <div class="cell num">0</div>
  </footer>
</div>
</body>
</html>
```
FILE: styles.css
```css
* { box-sizing: border-box; }
body { margin: 0; background: #000; color: #1c1c1c; font: 8px/12px Roboto, "Open Sans", sans-serif; }
button, select { font: inherit; color: inherit; border: 0; background: none; padding: 0; margin: 0; white-space: nowrap; }
h1, h2, ul { margin: 0; padding: 0; font: inherit; list-style: none; }
.sprite { position: absolute; width: 0; height: 0; }
.icon { width: 12px; height: 12px; flex: none; }

.app { min-height: 100vh; padding: 14px 0; display: flex; flex-direction: column; overflow: hidden; }

.titlebar { height: 12px; display: flex; align-items: center; background: linear-gradient(90deg, #b9c6d6 0, #8fa9c8 120px, #34639a 150px, #2f629c 480px, #285080 960px, #23497a 1170px, #5b7596 1210px, #8795a8 100%); border-bottom: 2px solid #6c7c8e; }
.titlebar .icon { margin-left: -2px; }
.title { margin-left: 2px; color: #101820; line-height: 10px; text-shadow: 0 0 4px #dfe8f2, 0 0 6px #dfe8f2; }
.winbtns { margin-left: auto; display: flex; align-self: stretch; }
.winbtn { width: 18px; height: 9px; display: flex; justify-content: center; background: linear-gradient(#9aa6b5, #5f7086); border-left: 1px solid #d0d8e0; }
.winbtn svg { width: 12px; height: 10px; }
.winbtn.close { width: 30px; background: linear-gradient(#d88074, #bd3a2a); }

.bar { height: 16px; display: flex; align-items: center; background: #eee; border-top: 1px solid #fff; border-bottom: 1px solid #b4b4b4; }
.bar.last { border-bottom-color: #e4ebf2; }
.menu { height: 17px; padding-left: 7px; gap: 8px; }
.grip { flex: none; width: 2px; height: 12px; margin: 0 2px 0 1px; border-right: 1px solid #aaa; background: #fff; }
.sep { flex: none; width: 2px; height: 14px; margin: 0 2px 0 1px; border-left: 1px solid #aaa; background: #fff; }
.label { margin: 0 3px; }
.tb { width: 16px; height: 14px; flex: none; display: flex; align-items: center; justify-content: center; }
.tb.wide { width: 20px; }
.tb.on { background: #fafafa; box-shadow: inset 1px 1px #c0c0c0; }
.tb.drop { width: 22px; gap: 1px; }
.drop::after { content: ""; border: 2px solid transparent; border-top: 3px solid #111; border-bottom: 0; }
.off { color: #999; }
.off.drop::after { border-top-color: #999; }
.tool { height: 14px; display: flex; align-items: center; padding: 0 4px 0 3px; gap: 1px; }
.tool.drop::after { margin-left: 4px; }
.combo { width: 64px; height: 13px; margin-left: 2px; padding-left: 1px; background: linear-gradient(#111, #111) right 4px center / 5px 1px no-repeat, linear-gradient(#111, #111) right 5px top 7px / 3px 1px no-repeat, #fff; appearance: none; line-height: 13px; }
.combo.medium { width: 86px; }
.combo.long { width: 121px; }

.work { flex: 1; display: grid; grid-template-columns: 314px 1fr; column-gap: 4px; background: #eee; padding-bottom: 4px; }
.side { display: flex; flex-direction: column; min-height: 0; }
.head { height: 14px; flex: none; display: flex; align-items: center; justify-content: space-between; padding-right: 1px; color: #5e6b78; background: linear-gradient(90deg, #c3cad2, #c6d6e8); border-bottom: 1px solid #98a2ae; }
.pin { width: 8px; height: 8px; color: #222; }
.head.light { height: 15px; padding-left: 2px; padding-right: 0; color: #fff; background: #b4c9e3; }
.head.light .pin { color: #fff; margin-right: -4px; }
.tree { flex: 1; background: #fff; padding-top: 1px; }
.node { height: 12px; display: flex; align-items: center; padding-left: 3px; position: relative; }
.node.sub { padding-left: 21px; }
.node.sub::before { content: ""; position: absolute; left: 25px; top: 0; bottom: 0; border-left: 1px dotted #999; }
.node.sub:last-child::before { bottom: 6px; }
.box { flex: none; width: 8px; height: 8px; border: 1px solid #999; background: linear-gradient(#333, #333) center / 4px 1px no-repeat, #fff; position: relative; }
.box.plus { background: linear-gradient(#333, #333) center / 4px 1px no-repeat, linear-gradient(#333, #333) center / 1px 4px no-repeat, #fff; }
.twig { flex: none; width: 8px; height: 1px; background: linear-gradient(90deg, transparent 4px, #aaa 4px); }
.tick { width: 7px; height: 7px; margin-left: 5px; align-self: flex-end; flex: none; }
.node .tick + .icon { margin: 0 2px 0 -1px; }

.tabs { height: 18px; flex: none; display: flex; align-items: flex-start; }
.side .tabs { padding-left: 1px; }
.tab { height: 13px; padding: 1px 3px 0; border-bottom: 1px solid #888; }
.tab.current { height: 14px; padding: 2px 4px 0; border: solid #555; border-width: 0 1px 1px 0; }
.tab.boxed { border: 1px solid #555; padding: 0 3px; }
.rest { flex: 1; border-top: 1px solid #555; }
.details { height: 186px; background: #fff; }
.grid { width: 100%; border-collapse: collapse; table-layout: fixed; line-height: 11px; }
.grid td, .grid th { height: 12px; padding: 0 2px; border: 1px solid #b8b8b8; text-align: left; white-space: nowrap; }
.grid th { color: #000; font-weight: 700; }
.grid td.fold { padding: 0; border-color: #fff #b8b8b8 #fff #fff; border-left: 0; }
.fold .box { display: block; width: 6px; height: 7px; }
.fold-col { width: 7px; }
.key-col { width: 97px; }
.grid .ro { background: #e9e9e9; }

.view { display: flex; flex-direction: column; min-width: 0; border-left: 1px solid #666; }
.canvas { flex: 1; min-height: 0; position: relative; background: linear-gradient(#6f8cde, #fff); }
.scene { position: absolute; inset: 0; width: 100%; height: 100%; }
.view .tabs { height: 14px; padding-left: 1px; }
.logo { font: 700 17px "Open Sans", sans-serif; fill: #fff; }
.release { font: 11px "Open Sans", sans-serif; fill: #f2f6ff; }
.edition { font: 10px "Open Sans", sans-serif; fill: #fff; }
.dim { font: 10px "Liberation Sans", sans-serif; fill: #84a070; }
.mark { font: 700 10px "Liberation Sans", sans-serif; fill: #ddd; stroke: #333; stroke-width: 1px; paint-order: stroke; }
.axis { font: 9px "Liberation Sans", sans-serif; }
.green { fill: #3c9a50; } .red { fill: #cc2b3c; } .blue { fill: #14148c; }
.scale { font: 9px "Liberation Sans", sans-serif; fill: #333; }

.status { height: 11px; flex: none; display: flex; gap: 2px; padding-right: 10px; overflow: hidden; background: #eee; }
.cell { height: 13px; display: flex; align-items: center; border: solid #aaa; border-width: 1px 0 0 1px; padding-left: 1px; }
.cell .icon { margin: 0 6px 0 2px; }
.grow { flex: 1; }
.sel { width: 346px; } .unit { width: 75px; } .num { width: 37px; }
```
